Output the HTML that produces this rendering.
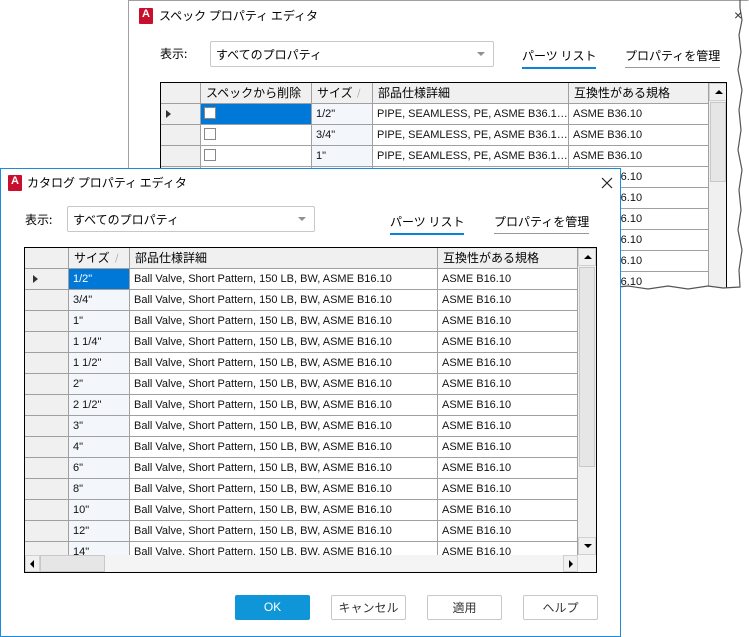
<!DOCTYPE html>
<html><head><meta charset="utf-8">
<style>
*{margin:0;padding:0;box-sizing:border-box}
body{width:749px;height:637px;background:#fff;position:relative;overflow:hidden;font-family:"Liberation Sans","Noto Sans CJK JP",sans-serif;font-size:12px;color:#000}
.abs{position:absolute}
.t{position:absolute;white-space:nowrap;line-height:14px}
.jp{font-family:"Noto Sans CJK JP",sans-serif}
.cell{position:absolute;height:21px;border-right:1px solid #a0a0a0;border-bottom:1px solid #a0a0a0;white-space:nowrap;overflow:hidden;text-overflow:ellipsis;line-height:20px;padding-left:4px;font-size:11px;color:#111}
.hd{position:absolute;height:21px;background:#f0f0f0;border-right:1px solid #a0a0a0;border-bottom:1px solid #a0a0a0;white-space:nowrap;line-height:20px;padding-left:5px;font-size:12px;font-family:"Noto Sans CJK JP",sans-serif}
.rh{position:absolute;height:21px;background:#f0f0f0;border-right:1px solid #a0a0a0;border-bottom:1px solid #a0a0a0}
.icon{position:absolute;width:14px;height:16px;background:#c8102e;border-radius:1px}
.icon b{position:absolute;left:3px;top:0;color:#fff;font-size:11px;font-weight:bold;font-family:"Liberation Sans",sans-serif}
.combo{position:absolute;border:1px solid #c8c8c8;background:#fff;border-radius:2px}
.combo span{position:absolute;left:5px;top:4px;font-size:12px}
.combo i{position:absolute;right:8px;top:10px;width:0;height:0;border-left:4px solid transparent;border-right:4px solid transparent;border-top:4px solid #909090}
.lnk{position:absolute;font-size:12px;padding-bottom:3px}
.btn{position:absolute;width:75px;height:25px;border:1px solid #c8c8c8;background:#fff;text-align:center;line-height:23px;font-size:12px;border-radius:2px;color:#333}
.sb{position:absolute;background:#f0f0f0}
.arr{position:absolute;background:#f0f0f0;border:1px solid #d0d0d0}
.tri-u{position:absolute;left:5px;top:6px;border-left:4px solid transparent;border-right:4px solid transparent;border-bottom:4px solid #000}
.tri-d{position:absolute;left:5px;top:6px;border-left:4px solid transparent;border-right:4px solid transparent;border-top:4px solid #000}
.chk{position:absolute;width:12px;height:12px;border:1px solid #888;background:#fff}
</style></head><body>

<div class="abs" style="left:128px;top:0;width:621px;height:292px;clip-path:polygon(0 0,100% 0,612px 8px,614px 20px,611px 35px,613px 52px,610px 70px,614px 90px,611px 110px,613px 130px,610px 150px,614px 170px,611px 190px,613px 210px,610px 230px,614px 250px,611px 270px,612px 287px,595px 288px,580px 286px,560px 289px,540px 286px,520px 289px,500px 286px,480px 288px,460px 286px,440px 289px,420px 286px,400px 289px,380px 286px,360px 289px,340px 286px,320px 289px,300px 287px,0 287px);background:#fff;border-left:1px solid #a0a0a0;border-top:1px solid #a0a0a0">
  <div class="icon" style="left:10px;top:7px"><b>A</b></div>
  <div class="t jp" style="left:30px;top:8px;font-size:12px">スペック プロパティ エディタ</div>
  <div class="t jp" style="left:31px;top:46px">表示:</div>
  <div class="combo" style="left:81px;top:40px;width:284px;height:26px"><span class="jp">すべてのプロパティ</span><i></i></div>
  <div class="lnk jp" style="left:393px;top:46px;border-bottom:2px solid #0a84d8">パーツ リスト</div>
  <div class="lnk jp" style="left:496px;top:46px;border-bottom:1px solid #999">プロパティを管理</div>
  <div class="abs" style="left:31px;top:81px;width:567px;height:220px;border:1px solid #000;background:#fff;overflow:hidden">
    <div class="rh" style="left:0;top:0;width:40px"></div>
    <div class="hd" style="left:40px;top:0;width:111px">スペックから削除</div>
    <div class="hd" style="left:151px;top:0;width:61px">サイズ<span style="position:absolute;left:45px;color:#999;font-size:9px">/</span></div>
    <div class="hd" style="left:212px;top:0;width:196px">部品仕様詳細</div>
    <div class="hd" style="left:408px;top:0;width:140px">互換性がある規格</div>
    <div id="backrows"></div>
    <div class="sb" style="left:548px;top:0;width:18px;height:220px"></div>
    <div class="arr" style="left:548px;top:0;width:18px;height:18px"><div class="tri-u"></div></div>
    <div class="abs" style="left:549px;top:19px;width:16px;height:80px;background:#e6e6e6;border:1px solid #c8c8c8"></div>
  </div>
</div>
<svg class="abs" style="left:128px;top:0" width="621" height="292"><polyline fill="none" stroke="#555" stroke-width="1.2" points="612,0 612,8 614,20 611,35 613,52 610,70 614,90 611,110 613,130 610,150 614,170 611,190 613,210 610,230 614,250 611,270 612,287 595,288 580,286 560,289 540,286 520,289 500,286 480,288 460,286 440,289 420,286 400,289 380,286 360,289 340,286 320,289 300,287"/><text x="606" y="20" font-size="14" fill="#333" font-family="Liberation Sans">×</text></svg>

<div class="abs" style="left:0;top:168px;width:621px;height:469px;background:#fff;border:1px solid #1a8ce0">
  <div class="icon" style="left:7px;top:6px"><b>A</b></div>
  <div class="t jp" style="left:26px;top:7px;font-size:12px">カタログ プロパティ エディタ</div>
  <svg class="abs" style="left:600px;top:8px" width="12" height="12"><path d="M1 1L11 11M11 1L1 11" stroke="#222" stroke-width="1.2"/></svg>
  <div class="t jp" style="left:24px;top:44px">表示:</div>
  <div class="combo" style="left:66px;top:37px;width:248px;height:26px"><span class="jp">すべてのプロパティ</span><i></i></div>
  <div class="lnk jp" style="left:389px;top:44px;border-bottom:2px solid #0a84d8">パーツ リスト</div>
  <div class="lnk jp" style="left:493px;top:44px;border-bottom:1px solid #999">プロパティを管理</div>
  <div class="abs" style="left:23px;top:78px;width:573px;height:326px;border:1px solid #000;background:#fff;overflow:hidden">
    <div class="rh" style="left:0;top:0;width:44px"></div>
    <div class="hd" style="left:44px;top:0;width:61px">サイズ<span style="position:absolute;left:46px;color:#999;font-size:9px">/</span></div>
    <div class="hd" style="left:105px;top:0;width:308px">部品仕様詳細</div>
    <div class="hd" style="left:413px;top:0;width:140px">互換性がある規格</div>
    <div id="frontrows"></div>
    <div class="sb" style="left:553px;top:0;width:18px;height:307px"></div>
    <div class="arr" style="left:553px;top:0;width:18px;height:18px"><div class="tri-u"></div></div>
    <div class="abs" style="left:554px;top:19px;width:16px;height:200px;background:#e6e6e6;border:1px solid #c8c8c8"></div>
    <div class="arr" style="left:553px;top:289px;width:18px;height:18px"><div class="tri-d"></div></div>
    <div class="sb" style="left:0;top:307px;width:571px;height:17px;background:#f4f4f4"></div>
    <div class="arr" style="left:0;top:307px;width:15px;height:17px"><div style="position:absolute;left:4px;top:4px;border-top:4px solid transparent;border-bottom:4px solid transparent;border-right:4px solid #000"></div></div>
    <div class="abs" style="left:15px;top:307px;width:65px;height:17px;background:#e6e6e6;border:1px solid #c8c8c8"></div>
    <div class="arr" style="left:538px;top:307px;width:15px;height:17px"><div style="position:absolute;left:5px;top:4px;border-top:4px solid transparent;border-bottom:4px solid transparent;border-left:4px solid #000"></div></div>
  </div>
  <div class="btn" style="left:234px;top:426px;background:#0f96d8;border-color:#0f96d8;color:#fff">OK</div>
  <div class="btn jp" style="left:330px;top:426px">キャンセル</div>
  <div class="btn jp" style="left:426px;top:426px">適用</div>
  <div class="btn jp" style="left:522px;top:426px">ヘルプ</div>
</div>

<script>
(function(){
var b='',i;
var bs=['1/2"','3/4"','1"','','','','','','',''];
for(i=0;i<10;i++){var y=21+i*21;
b+='<div class="rh" style="left:0;top:'+y+'px;width:40px">'+(i==0?'<div style="position:absolute;left:5px;top:6px;border-top:4px solid transparent;border-bottom:4px solid transparent;border-left:5px solid #333"></div>':'')+'</div>';
b+='<div class="cell" style="left:40px;top:'+y+'px;width:111px;'+(i==0?'background:#0078d7':'')+'">'+(i<3?'<div class="chk" style="left:3px;top:3px"></div>':'')+'</div>';
b+='<div class="cell" style="left:151px;top:'+y+'px;width:61px;background:#f3f6fb">'+bs[i]+'</div>';
b+='<div class="cell" style="left:212px;top:'+y+'px;width:196px">'+(i<3?'PIPE, SEAMLESS, PE, ASME B36.10, ASME':'')+'</div>';
b+='<div class="cell" style="left:408px;top:'+y+'px;width:140px">ASME B36.10</div>';}
document.getElementById('backrows').innerHTML=b;
var f='',s=['1/2"','3/4"','1"','1 1/4"','1 1/2"','2"','2 1/2"','3"','4"','6"','8"','10"','12"','14"'];
for(i=0;i<14;i++){var y=21+i*21;
f+='<div class="rh" style="left:0;top:'+y+'px;width:44px">'+(i==0?'<div style="position:absolute;left:8px;top:6px;border-top:4px solid transparent;border-bottom:4px solid transparent;border-left:5px solid #333"></div>':'')+'</div>';
f+='<div class="cell" style="left:44px;top:'+y+'px;width:61px;'+(i==0?'background:#0078d7;color:#fff':'background:#f3f6fb')+'">'+s[i]+'</div>';
f+='<div class="cell" style="left:105px;top:'+y+'px;width:308px">Ball Valve, Short Pattern, 150 LB, BW, ASME B16.10</div>';
f+='<div class="cell" style="left:413px;top:'+y+'px;width:140px">ASME B16.10</div>';}
document.getElementById('frontrows').innerHTML=f;
})();
</script>
</body></html>
